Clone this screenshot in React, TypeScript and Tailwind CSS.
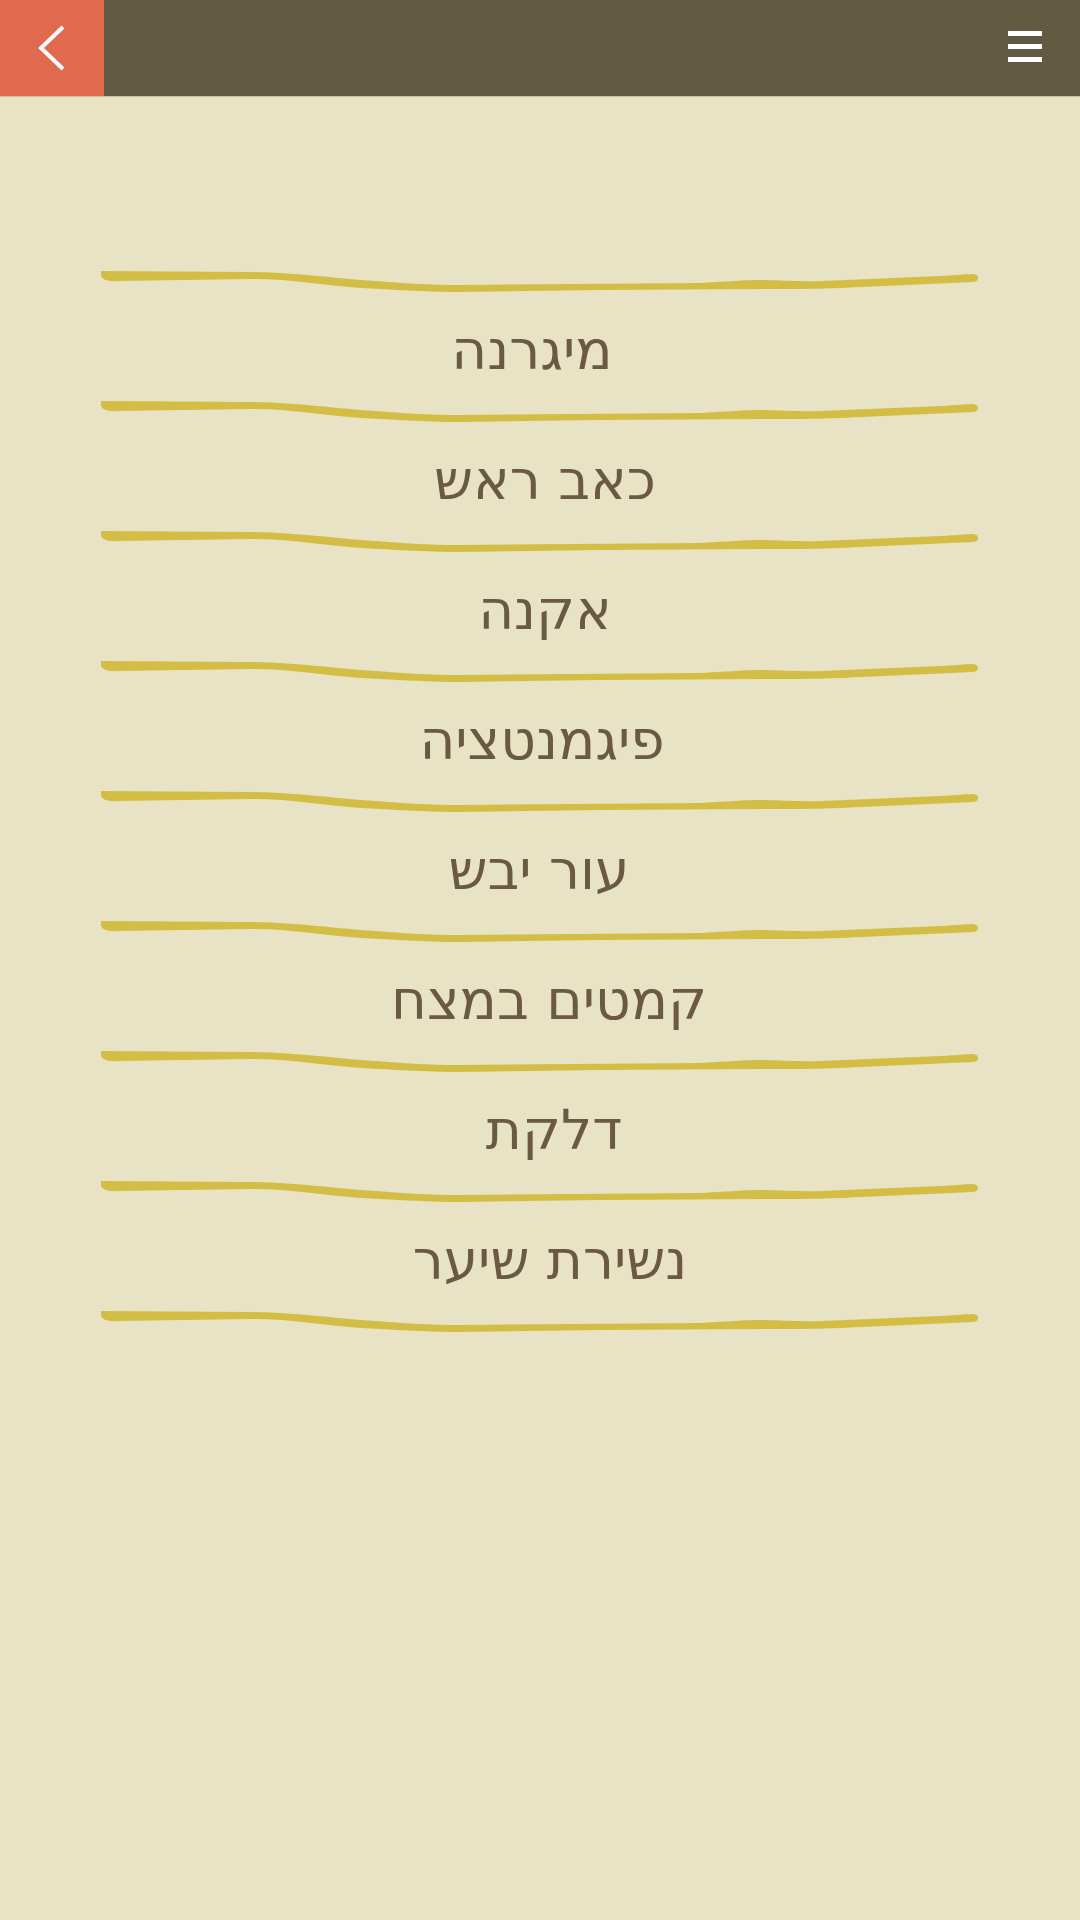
import React from 'react';

// the labels sit a little off-centre in the design, so each keeps its own nudge
const items = [
  { label: 'מיגרנה', nudge: '-translate-x-[8px]' },
  { label: 'כאב ראש', nudge: 'translate-x-[5px]' },
  { label: 'אקנה', nudge: 'translate-x-[5px]' },
  { label: 'פיגמנטציה', nudge: 'translate-x-[2px]' },
  { label: 'עור יבש', nudge: '-translate-x-[1px]' },
  { label: 'קמטים במצח', nudge: 'translate-x-[9px]' },
  { label: 'דלקת', nudge: 'translate-x-[14px]' },
  { label: 'נשירת שיער', nudge: 'translate-x-[10px]' },
];

const Divider = () => (
  <svg width="878" height="28" viewBox="0 0 878 28" className="block">
    <path
      d="M0,3 L150,4 C200,5 230,10 260,12 C300,15 330,17 360,17 L600,15 C620,14 640,12 660,12 C680,12 700,14 720,13 L840,8 C855,7 868,6 872,6 Q877,6.5 877,10 Q877,13.5 872,14 L760,19 C720,21 700,21 680,21 L500,22 L360,24 C330,24 300,22 260,20 C220,17 190,11 150,11 L16,13 Q2,14 0,8 Z"
      fill="#d4bd45"
    />
  </svg>
);

export default function App() {
  return (
    <div
      className="min-h-[1920px] w-[1080px] bg-[#e8e3c5]"
      style={{ fontFamily: '"DejaVu Sans", sans-serif' }}
    >
      <header className="flex h-[97px] items-stretch justify-between border-b border-[#c8c2a0] bg-[#615a42]">
        <button className="flex w-[104px] items-center justify-center bg-[#e06a4e]">
          <svg width="32" height="48" viewBox="0 0 32 48">
            <path d="M27,3 L5,24 L27,45" fill="none" stroke="#fff" strokeWidth="4" />
          </svg>
        </button>
        <button className="flex w-[72px] flex-col items-start gap-[8px] pt-[31px]">
          <span className="block h-[5px] w-[34px] bg-white" />
          <span className="block h-[5px] w-[34px] bg-white" />
          <span className="block h-[5px] w-[34px] bg-white" />
        </button>
      </header>
      <main className="mx-auto flex w-[878px] flex-col pt-[171px]" dir="rtl">
        <Divider />
        {items.map((it) => (
          <React.Fragment key={it.label}>
            <div className="flex h-[102px] items-center justify-center pt-[6px] text-[55px] leading-none text-[#6b5a42]">
              <span className={it.nudge}>{it.label}</span>
            </div>
            <Divider />
          </React.Fragment>
        ))}
      </main>
    </div>
  );
}
